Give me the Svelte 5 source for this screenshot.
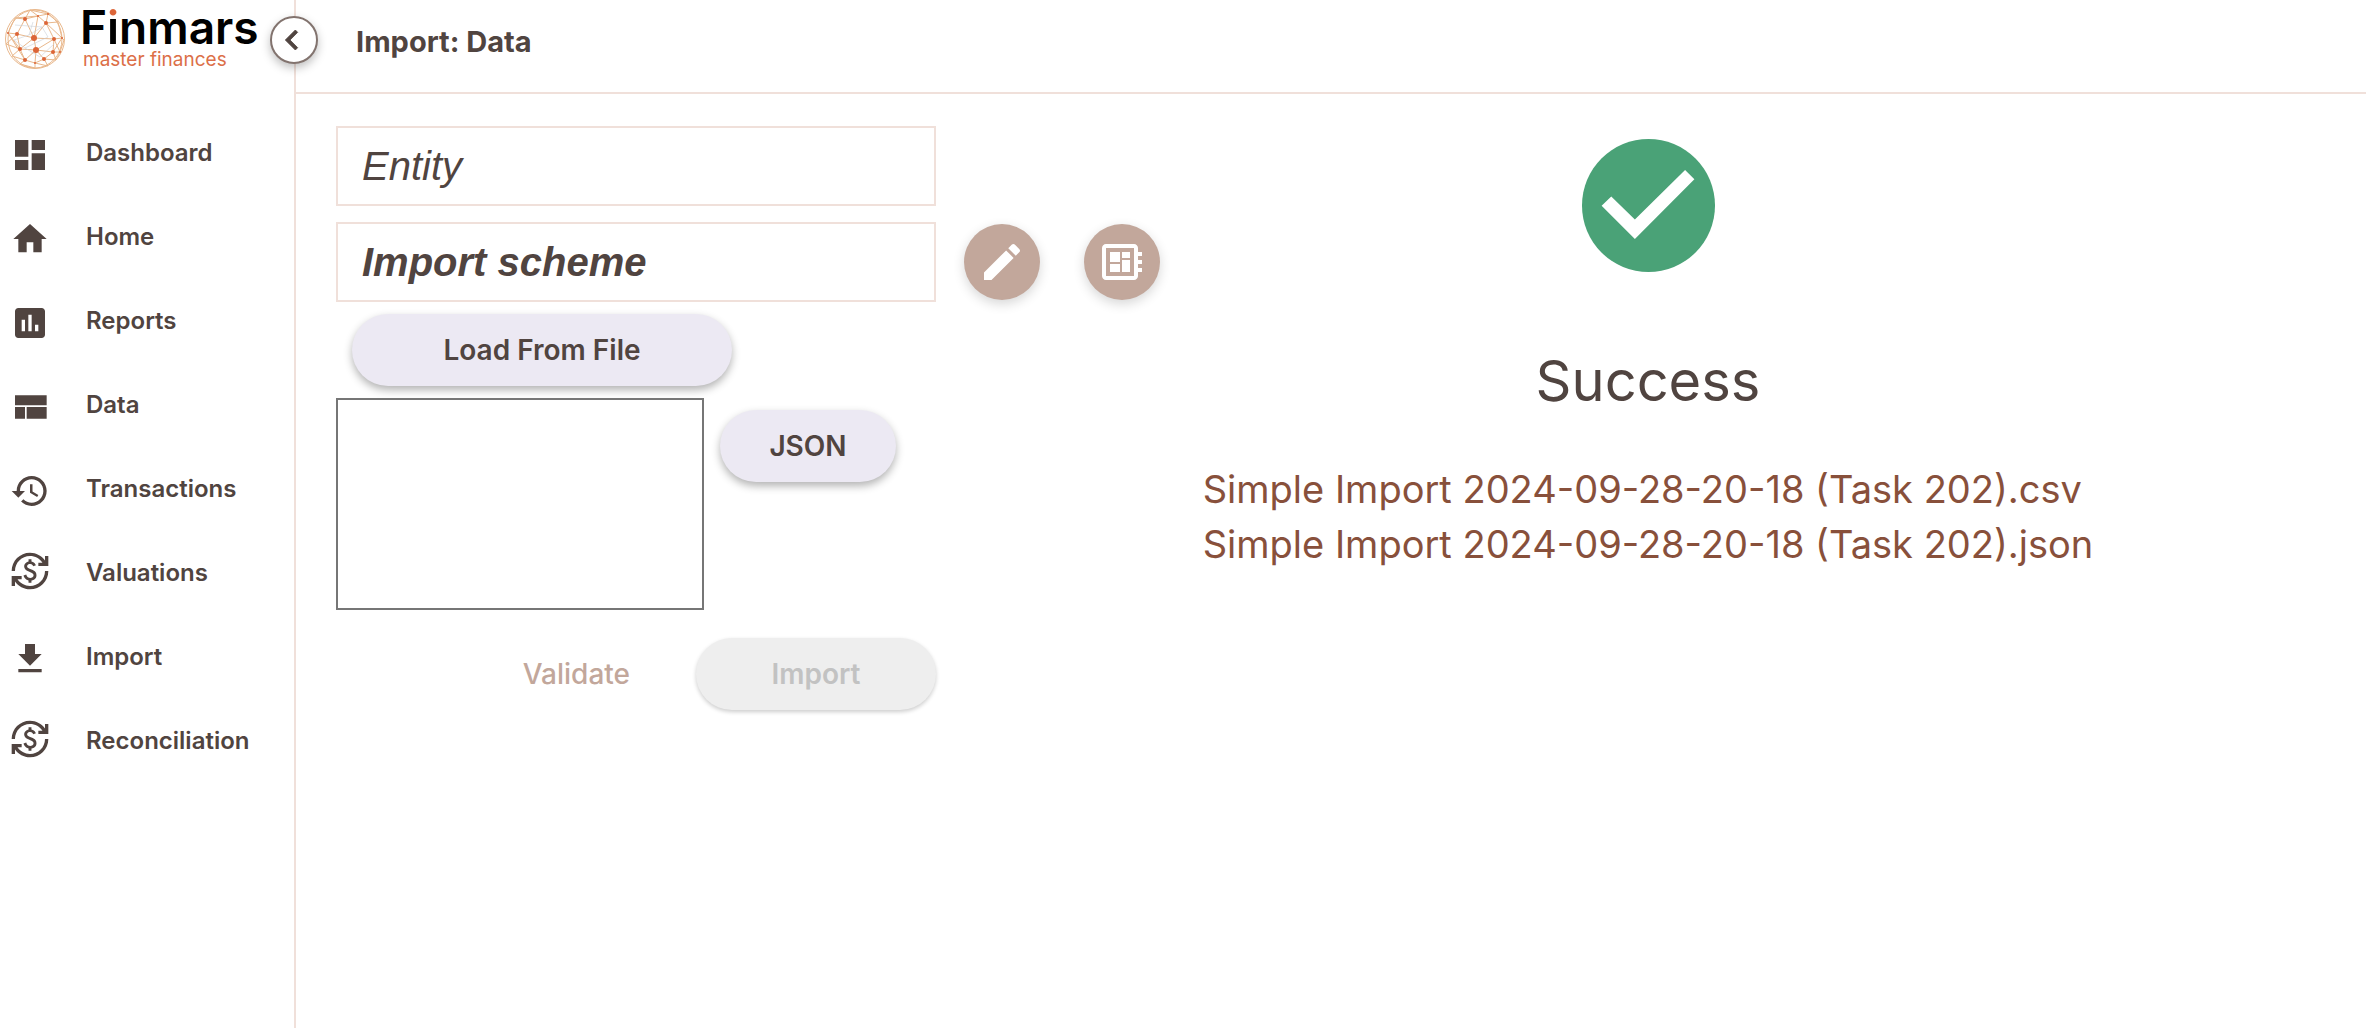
<script lang="ts">
	const sync =
		'M12.89 11.1c-1.78-.59-2.64-.96-2.64-1.9 0-1.02 1.11-1.39 1.81-1.39 1.31 0 1.79.99 1.9 1.34l1.58-.67c-.15-.44-.82-1.91-2.66-2.23V5h-1.75v1.26c-2.6.56-2.62 2.85-2.62 2.96 0 2.27 2.25 2.91 3.35 3.31 1.58.56 2.28 1.07 2.28 2.03 0 1.13-1.05 1.61-1.98 1.61-1.82 0-2.34-1.87-2.4-2.09l-1.66.67c.63 2.19 2.28 2.78 3.02 2.96V19h1.75v-1.24c.52-.09 3.02-.59 3.02-3.22.01-1.39-.6-2.61-3-3.44zM3 21H1v-6h6v2H4.52c1.61 2.41 4.36 4 7.48 4 4.97 0 9-4.03 9-9h2c0 6.08-4.92 11-11 11-3.72 0-7.01-1.85-9-4.67V21zM1 12C1 5.92 5.92 1 12 1c3.72 0 7.01 1.85 9 4.67V3h2v6h-6V7h2.48C17.87 4.59 15.12 3 12 3c-4.97 0-9 4.03-9 9H1z';

	const menu = [
		{ label: 'Dashboard', icon: 'M3 13h8V3H3v10zm0 8h8v-6H3v6zm10 0h8V11h-8v10zm0-18v6h8V3h-8z' },
		{ label: 'Home', icon: 'M10 20v-6h4v6h5v-8h3L12 3 2 12h3v8z' },
		{
			label: 'Reports',
			icon: 'M19 3H5c-1.1 0-2 .9-2 2v14c0 1.1.9 2 2 2h14c1.1 0 2-.9 2-2V5c0-1.1-.9-2-2-2zM9 17H7v-7h2v7zm4 0h-2V7h2v10zm4 0h-2v-4h2v4z'
		},
		{ label: 'Data', icon: 'M3 19h6v-7H3v7zm7 0h12v-7H10v7zM3 5v6h19V5H3z' },
		{
			label: 'Transactions',
			icon: 'M13 3c-4.97 0-9 4.03-9 9H1l3.89 3.89.07.14L9 12H6c0-3.87 3.13-7 7-7s7 3.13 7 7-3.13 7-7 7c-1.93 0-3.68-.79-4.94-2.06l-1.42 1.42C8.27 19.99 10.51 21 13 21c4.97 0 9-4.03 9-9s-4.03-9-9-9zm-1 5v5l4.28 2.54.72-1.21-3.5-2.08V8H12z'
		},
		{ label: 'Valuations', icon: sync, raised: true },
		{ label: 'Import', icon: 'M19 9h-4V3H9v6H5l7 7 7-7zM5 18v2h14v-2H5z' },
		{ label: 'Reconciliation', icon: sync, raised: true }
	];

	const files = [
		'Simple Import 2024-09-28-20-18 (Task 202).csv',
		'Simple Import 2024-09-28-20-18 (Task 202).json'
	];

	// x, y, radius
	const dots = [
		[34, 38, 3], [17, 34, 2], [54, 39, 2], [20, 49, 2], [36, 50, 3], [53, 52, 2],
		[46, 23, 2], [38, 16, 1], [25, 19, 2], [25, 60, 2], [35, 63, 1], [44, 59, 2],
		[62, 38, 1], [8, 33, 1], [60, 52, 1], [48, 14, 1]
	];

	let entity = '';
	let scheme = '';
	let json = '';
</script>

<div class="app">
	<aside>
		<a href="/" class="logo">
			<svg viewBox="0 0 70 76" aria-hidden="true">
				<g fill="none" stroke="#e9b88c" stroke-width="1">
					<circle cx="35" cy="39" r="29.5" />
					<ellipse cx="35" cy="39" rx="27" ry="29" />
					<path d="M34 38L17 34 25 19 38 16 46 23 34 38 20 49 36 50 54 39 46 23 62 38 54 39 53 52 36 50 25 60 20 49 17 34 8 33 20 49M34 38L25 19M34 38L54 39M34 38L36 50 44 59 53 52 60 52 54 39M25 60L35 63 44 59M17 34L6 44 20 49 12 56 25 60 20 64 35 68 35 63M25 19L15 18 8 33M25 19L30 10 38 16 48 14 46 23 58 22 62 38 64 40 60 52 56 60 44 59 48 66 35 63M30 10L48 14 58 22M34 38L38 16M36 50L35 63M15 18L38 16M53 52L62 38M8 33L25 60M56 60L53 52" />
				</g>
				<path fill="none" stroke="#cbd0d6" stroke-width=".6" d="M15 25L42 27 48 37 25 48 14 40 29 35 42 27M25 48L40 57 54 44M33 22L29 35" />
				<g fill="#dc6538">
					{#each dots as [x, y, r]}
						<circle cx={x} cy={y} {r} />
					{/each}
				</g>
			</svg>
			<span class="brand">
				<span class="name">F<span class="dotted">i</span>nmars</span>
				<span class="slogan">master finances</span>
			</span>
		</a>

		<nav>
			{#each menu as item}
				<a href="/{item.label.toLowerCase()}">
					<svg viewBox="0 0 24 24" class:raised={item.raised} aria-hidden="true"><path d={item.icon} /></svg>
					<span>{item.label}</span>
				</a>
			{/each}
		</nav>

		<button type="button" class="toggle" aria-label="Collapse menu">
			<svg viewBox="0 0 24 24" aria-hidden="true"><path d="M15.41 7.41L14 6l-6 6 6 6 1.41-1.41L10.83 12z" /></svg>
		</button>
	</aside>

	<main>
		<header>
			<h1>Import: Data</h1>
		</header>

		<div class="content">
			<form on:submit|preventDefault>
				<input class="field" type="text" placeholder="Entity" aria-label="Entity" bind:value={entity} />

				<div class="row">
					<input class="field scheme" type="text" placeholder="Import scheme" aria-label="Import scheme" bind:value={scheme} />
					<div class="tools">
						<button type="button" class="round" aria-label="Edit scheme">
							<svg viewBox="0 0 24 24" aria-hidden="true"><path d="M3 17.25V21h3.75L17.81 9.94l-3.75-3.75L3 17.25zM20.71 7.04c.39-.39.39-1.02 0-1.41l-2.34-2.34c-.39-.39-1.02-.39-1.41 0l-1.83 1.83 3.75 3.75 1.83-1.83z" /></svg>
						</button>
						<button type="button" class="round" aria-label="Edit scheme as JSON">
							<svg viewBox="0 0 24 24" aria-hidden="true"><path d="M22 9V7h-2V5c0-1.1-.9-2-2-2H4c-1.1 0-2 .9-2 2v14c0 1.1.9 2 2 2h14c1.1 0 2-.9 2-2v-2h2v-2h-2v-2h2v-2h-2V9h2zm-4 10H4V5h14v14zM6 13h5v4H6zm6-6h4v3h-4zM6 7h5v5H6zm6 4h4v6h-4z" /></svg>
						</button>
					</div>
				</div>

				<button type="button" class="pill load">Load From File</button>

				<div class="source">
					<textarea aria-label="JSON data" bind:value={json}></textarea>
					<button type="button" class="pill json">JSON</button>
				</div>

				<div class="actions">
					<button type="button" class="validate">Validate</button>
					<button type="submit" class="pill import" disabled>Import</button>
				</div>
			</form>

			<section class="result">
				<svg viewBox="2 2 20 20" aria-hidden="true">
					<circle cx="12" cy="12" r="10" fill="#4aa277" />
					<path fill="#fff" d="M9.95 17.05l-5-5 1.45-1.4 3.55 3.45 7.55-7.45 1.4 1.4z" />
				</svg>
				<h2>Success</h2>
				<div class="files">
					{#each files as file}
						<a href="/files/{encodeURIComponent(file)}">{file}</a>
					{/each}
				</div>
			</section>
		</div>
	</main>
</div>

<style>
	:global(body) {
		background: #fff;
	}

	.app {
		display: flex;
		min-height: 100vh;
		color: #504440;
		font-family: Inter, 'Liberation Sans', sans-serif;
	}

	.app *,
	.app {
		box-sizing: border-box;
	}

	a {
		color: inherit;
		text-decoration: none;
	}

	button {
		padding: 0;
		border: none;
		color: inherit;
		font-family: inherit;
		cursor: pointer;
	}

	svg {
		display: block;
		flex-shrink: 0;
		fill: currentColor;
	}

	aside {
		position: relative;
		flex: 0 0 296px;
		border-right: 2px solid #f0e0da;
	}

	.logo {
		display: flex;
		height: 80px;
	}

	.logo > svg {
		width: 70px;
		height: 76px;
	}

	.brand {
		display: flex;
		flex-direction: column;
		padding-left: 10px;
	}

	.name {
		color: #000;
		font-size: 46px;
		font-weight: 600;
		line-height: 54px;
	}

	.dotted {
		background: linear-gradient(#dc6538 18px, #000 18px);
		background-clip: text;
		color: transparent;
	}

	.slogan {
		padding-left: 3px;
		color: #dc6f48;
		font-size: 19px;
		line-height: 12px;
	}

	nav {
		display: flex;
		flex-direction: column;
		padding-top: 30px;
	}

	nav a {
		display: flex;
		align-items: center;
		gap: 36px;
		height: 84px;
		padding-left: 10px;
		font-size: 24px;
		font-weight: 600;
	}

	nav svg {
		width: 40px;
		height: 40px;
		margin-top: 6px;
	}

	nav svg.raised {
		margin-top: -2px;
	}

	.toggle {
		position: absolute;
		top: 16px;
		right: -24px;
		display: flex;
		align-items: center;
		justify-content: center;
		width: 48px;
		height: 48px;
		border: 2px solid #82736e;
		border-radius: 50%;
		background: #fff;
		box-shadow: 0 4px 10px rgba(0, 0, 0, 0.25);
	}

	.toggle svg {
		width: 40px;
		height: 40px;
		margin-right: 4px;
		stroke: currentColor;
		stroke-width: 0.5;
	}

	main {
		flex: 1;
		min-width: 0;
	}

	header {
		display: flex;
		align-items: center;
		height: 94px;
		padding: 0 60px 10px;
		border-bottom: 2px solid #f0e0da;
	}

	h1 {
		margin: 0;
		font-size: 29px;
		font-weight: 700;
	}

	.content {
		display: flex;
		padding-top: 32px;
	}

	form {
		display: flex;
		flex: 0 0 880px;
		flex-direction: column;
		padding-left: 40px;
	}

	.field {
		width: 600px;
		height: 80px;
		padding: 0 24px;
		border: 2px solid #f0e0da;
		background: #fff;
		color: inherit;
		font: italic 40px 'Liberation Sans', sans-serif;
	}

	.field::placeholder {
		color: inherit;
		opacity: 1;
	}

	.scheme {
		font-weight: 700;
	}

	.row {
		display: flex;
		align-items: center;
		gap: 28px;
		margin-top: 16px;
	}

	.tools {
		display: flex;
		gap: 44px;
	}

	.round {
		display: flex;
		align-items: center;
		justify-content: center;
		width: 76px;
		height: 76px;
		border-radius: 50%;
		background: #c2a79b;
		color: #fff;
		box-shadow: 0 4px 12px rgba(0, 0, 0, 0.16);
	}

	.round svg {
		width: 48px;
		height: 48px;
	}

	.pill {
		height: 72px;
		border-radius: 36px;
		background: #ece9f3;
		box-shadow: 0 4px 8px rgba(0, 0, 0, 0.3);
		font-size: 28px;
		font-weight: 600;
	}

	.load {
		width: 380px;
		margin: 12px 16px;
	}

	.source {
		display: flex;
		align-items: flex-start;
		gap: 16px;
	}

	textarea {
		width: 368px;
		height: 212px;
		border: 2px solid #767676;
		background: #fff;
		resize: none;
	}

	.json {
		width: 176px;
		margin-top: 12px;
	}

	.actions {
		display: flex;
		justify-content: flex-end;
		gap: 66px;
		width: 600px;
		margin-top: 28px;
	}

	.validate {
		background: none;
		color: #c2a79b;
		font-size: 28px;
		font-weight: 500;
	}

	.import {
		width: 240px;
		background: #eee;
		color: #c2c2c2;
		box-shadow: 0 2px 4px rgba(0, 0, 0, 0.2);
		cursor: default;
	}

	.result {
		display: flex;
		flex: 1;
		flex-direction: column;
		align-items: center;
		max-width: 944px;
		padding-top: 13px;
	}

	.result svg {
		width: 133px;
		height: 133px;
	}

	h2 {
		margin: 74px 0 46px;
		font-size: 56px;
		font-weight: 400;
		line-height: 70px;
	}

	.files {
		display: flex;
		flex-direction: column;
		color: #88503b;
		font-size: 38px;
		line-height: 55px;
	}
</style>
